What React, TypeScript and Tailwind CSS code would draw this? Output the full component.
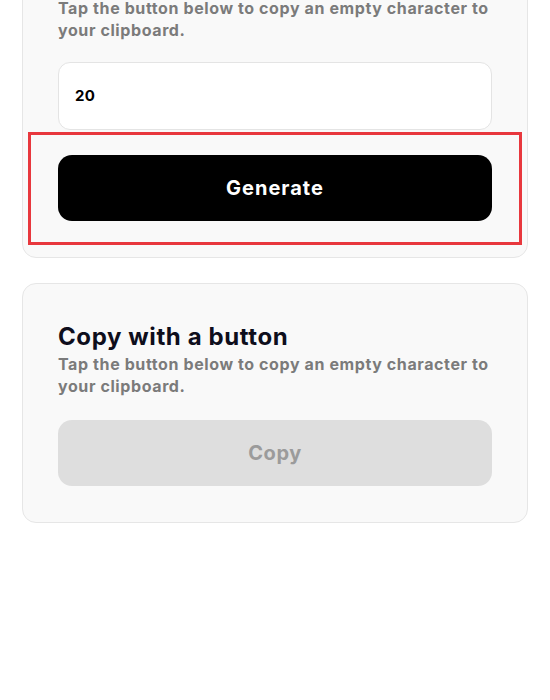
import React from 'react';

const font = { fontFamily: 'Inter, "Noto Sans", sans-serif' };

function Description() {
    return (
        <p className="text-[16px] leading-[22px] font-bold text-[#7b7b7b] tracking-[0.6px]">
            Tap the button below to copy an empty character to your clipboard.
        </p>
    );
}

export default function App() {
    return (
        <div className="min-h-[700px] bg-white" style={font}>
            <div className="px-[22px] pb-10 -mt-[31px] flex flex-col gap-[25px]">
                {/* generator card, scrolled so its heading sits above the fold */}
                <div className="rounded-[14px] border border-[#e6e6e6] bg-[#f9f9f9] px-[35px] pt-[27px] pb-[36px]">
                    <Description />
                    <div className="mt-[21px] h-[68px] rounded-[12px] border border-[#e4e4e4] bg-white flex items-center px-[16px]">
                        <span className="text-[15px] font-bold text-black tracking-[0.3px]">20</span>
                    </div>
                    <div className="relative mt-[25px]">
                        <button className="w-full h-[66px] rounded-[14px] bg-black text-white text-[20px] font-bold tracking-[1px]">
                            Generate
                        </button>
                        <div className="absolute -left-[30px] -right-[30px] -top-[23px] -bottom-[24px] border-[3px] border-[#e8373d] pointer-events-none" />
                    </div>
                </div>

                <div className="rounded-[14px] border border-[#e6e6e6] bg-[#f9f9f9] px-[35px] pt-[37px] pb-[36px]">
                    <h2 className="text-[24px] leading-[32px] font-bold text-[#0e0e1c] tracking-[0.6px]">Copy with a button</h2>
                    <Description />
                    <button className="mt-[23px] w-full h-[66px] rounded-[14px] bg-[#dedede] text-[#9b9b9b] text-[20px] font-bold tracking-[0.6px]">
                        Copy
                    </button>
                </div>
            </div>
        </div>
    );
}
